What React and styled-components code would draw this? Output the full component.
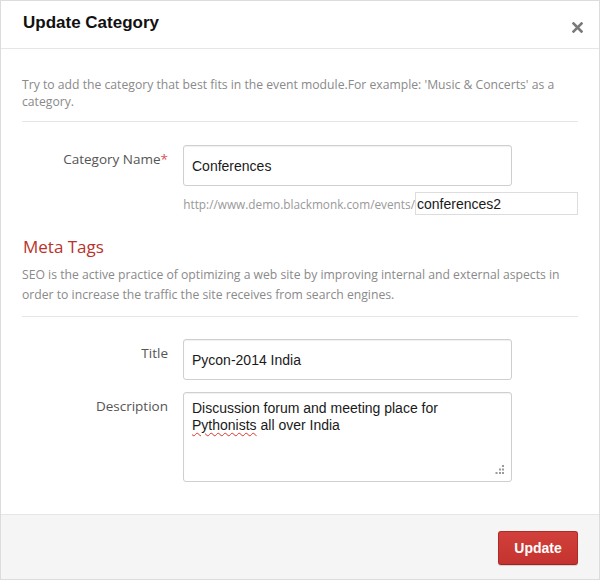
import React from 'react';
import styled, { createGlobalStyle } from 'styled-components';

const COLORS = {
  border: '#dcdcdc',
  rule: '#e6e6e6',
  muted: '#8a8a8a',
  label: '#555555',
  text: '#1a1a1a',
  red: '#b8332c',
  button: '#cc3a36',
};

const GlobalStyle = createGlobalStyle`
  html, body {
    margin: 0;
    padding: 0;
    background: #ffffff;
  }
  * {
    box-sizing: border-box;
  }
`;

const UpdateCategoryModal = () => {
  return (
    <Modal>
      <Header>
        <Title>Update Category</Title>
        <CloseButton aria-label="Close">
          <svg width="11" height="11" viewBox="0 0 11 11">
            <path d="M1.5 1.5 L9.5 9.5 M9.5 1.5 L1.5 9.5" stroke="#7a7a7a" strokeWidth="2.6" strokeLinecap="square" />
          </svg>
        </CloseButton>
      </Header>

      <Body>
        <Intro>
          Try to add the category that best fits in the event module.For example: 'Music &amp; Concerts' as a category.
        </Intro>
        <Rule />

        <FormRow $top={23}>
          <Label>Category Name<Required>*</Required></Label>
          <TextInput defaultValue="Conferences" />
        </FormRow>
        <SlugRow>
          <SlugPrefix>http://www.demo.blackmonk.com/events/</SlugPrefix>
          <SlugInput defaultValue="conferences2" />
        </SlugRow>

        <SectionTitle>Meta Tags</SectionTitle>
        <SectionText>
          SEO is the active practice of optimizing a web site by improving internal and external aspects in order to increase the traffic the site receives from search engines.
        </SectionText>
        <Rule />

        <FormRow $top={22}>
          <Label>Title</Label>
          <TextInput defaultValue="Pycon-2014 India" />
        </FormRow>
        <FormRow $top={12}>
          <Label>Description</Label>
          <TextArea role="textbox" aria-multiline="true">
            Discussion forum and meeting place for <Misspelt>Pythonists</Misspelt> all over India
            <Grip>
              <svg width="9" height="9" viewBox="0 0 9 9" fill="#9a9a9a">
                <rect x="7" y="0" width="2" height="2" />
                <rect x="4" y="3.5" width="2" height="2" />
                <rect x="7" y="3.5" width="2" height="2" />
                <rect x="0.5" y="7" width="2" height="2" />
                <rect x="4" y="7" width="2" height="2" />
                <rect x="7" y="7" width="2" height="2" />
              </svg>
            </Grip>
          </TextArea>
        </FormRow>
      </Body>

      <Footer>
        <PrimaryButton>Update</PrimaryButton>
      </Footer>
    </Modal>
  );
};

const Modal = styled.div`
  width: 600px;
  height: 580px;
  display: flex;
  flex-direction: column;
  background: #ffffff;
  border: 1px solid ${COLORS.border};
`;

const Header = styled.div`
  height: 48px;
  flex-shrink: 0;
  display: flex;
  align-items: center;
  justify-content: space-between;
  padding: 0 16px 0 22px;
  border-bottom: 1px solid ${COLORS.rule};
`;

const Title = styled.h3`
  margin: 0 0 3px;
  font-family: "Liberation Sans", Arial, sans-serif;
  font-size: 17px;
  font-weight: bold;
  color: #111111;
`;

const CloseButton = styled.button`
  border: 0;
  background: none;
  padding: 0;
  margin-top: 6px;
  display: flex;
  cursor: pointer;
`;

const Body = styled.div`
  flex: 1;
  padding: 27px 21px 0 21px;
`;

const Intro = styled.p`
  margin: 0 0 11px;
  font-family: "Open Sans", sans-serif;
  font-size: 12.2px;
  line-height: 17px;
  color: ${COLORS.muted};
`;

const Rule = styled.hr`
  margin: 0;
  border: 0;
  border-top: 1px solid ${COLORS.rule};
`;

const FormRow = styled.div`
  display: grid;
  grid-template-columns: 146px 329px;
  column-gap: 15px;
  margin-top: ${props => props.$top}px;
`;

const Label = styled.label`
  text-align: right;
  padding-top: 5px;
  font-family: "Open Sans", sans-serif;
  font-size: 13.5px;
  color: ${COLORS.label};
`;

const Required = styled.span`
  color: #d9534f;
`;

const TextInput = styled.input`
  height: 41px;
  padding: 0 8px;
  border: 1px solid #cfcfcf;
  border-radius: 3px;
  box-shadow: inset 0 1px 1px rgba(0, 0, 0, 0.06);
  font-family: "Liberation Sans", Arial, sans-serif;
  font-size: 14px;
  color: ${COLORS.text};
  outline: none;
`;

const SlugRow = styled.div`
  display: flex;
  align-items: center;
  justify-content: flex-end;
  margin-top: 6px;
`;

const SlugPrefix = styled.span`
  font-family: "Open Sans", sans-serif;
  font-size: 11.8px;
  color: #999999;
`;

const SlugInput = styled.input`
  width: 163px;
  height: 23px;
  padding: 0 1px;
  border: 1px solid #dddddd;
  font-family: "Liberation Sans", Arial, sans-serif;
  font-size: 14px;
  color: ${COLORS.text};
  outline: none;
`;

const SectionTitle = styled.h4`
  margin: 21px 0 0 1px;
  font-family: "Open Sans", sans-serif;
  font-size: 17px;
  font-weight: normal;
  line-height: 22px;
  color: ${COLORS.red};
`;

const SectionText = styled.p`
  margin: 7px 0 11px;
  font-family: "Open Sans", sans-serif;
  font-size: 12.2px;
  line-height: 20px;
  color: ${COLORS.muted};
`;

const TextArea = styled.div`
  position: relative;
  height: 90px;
  padding: 7px 8px;
  border: 1px solid #cfcfcf;
  border-radius: 3px;
  box-shadow: inset 0 1px 1px rgba(0, 0, 0, 0.06);
  font-family: "Liberation Sans", Arial, sans-serif;
  font-size: 14px;
  line-height: 17px;
  color: ${COLORS.text};
`;

const Misspelt = styled.span`
  text-decoration: underline wavy #e0322a;
  text-decoration-thickness: 1px;
  text-underline-offset: 2px;
`;

const Grip = styled.span`
  position: absolute;
  right: 7px;
  bottom: 7px;
  display: flex;
`;

const Footer = styled.div`
  height: 65px;
  flex-shrink: 0;
  display: flex;
  align-items: center;
  justify-content: flex-end;
  padding: 0 21px 0 0;
  background: #f5f5f5;
  border-top: 1px solid ${COLORS.rule};
`;

const PrimaryButton = styled.button`
  width: 80px;
  height: 34px;
  margin-top: 2px;
  border: 1px solid #b02a26;
  border-bottom-color: #9e2420;
  border-radius: 3px;
  background: linear-gradient(#d2403b, #c4332f);
  box-shadow: 0 1px 1px rgba(0, 0, 0, 0.15);
  font-family: "Liberation Sans", Arial, sans-serif;
  font-size: 14px;
  font-weight: bold;
  color: #ffffff;
  cursor: pointer;
`;

export default function App() {
  return (
    <>
      <GlobalStyle />
      <UpdateCategoryModal />
    </>
  );
}
